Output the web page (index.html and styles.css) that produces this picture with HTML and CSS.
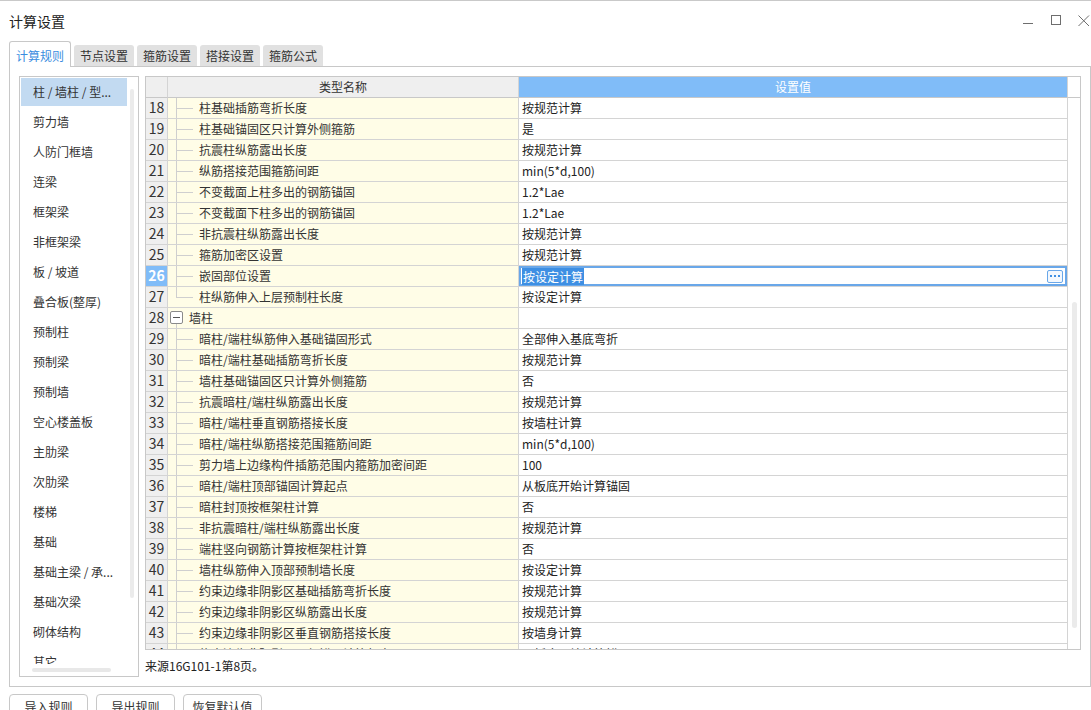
FILE: index.html
```html
<!DOCTYPE html>
<html lang="zh-CN">
<head>
<meta charset="utf-8">
<title>计算设置</title>
<link rel="stylesheet" href="styles.css">
</head>
<body>
<div class="window">
  <header class="titlebar">
    <span class="title">计算设置</span>
    <div class="controls">
      <svg class="ctl" width="12" height="12" viewBox="0 0 12 12"><line x1="1" y1="8.5" x2="11" y2="8.5" stroke="#6e6e6e" stroke-width="1"/></svg>
      <svg class="ctl" width="12" height="12" viewBox="0 0 12 12"><rect x="1.5" y="0.5" width="9" height="9" fill="none" stroke="#6e6e6e" stroke-width="1"/></svg>
      <svg class="ctl" width="12" height="12" viewBox="0 0 12 12"><path d="M0.5 0.5 L11 11 M11 0.5 L0.5 11" stroke="#6e6e6e" stroke-width="1" fill="none"/></svg>
    </div>
  </header>

  <nav class="tabs">
    <div class="tab active">计算规则</div>
    <div class="tab">节点设置</div>
    <div class="tab">箍筋设置</div>
    <div class="tab">搭接设置</div>
    <div class="tab">箍筋公式</div>
  </nav>

  <section class="panel">
    <aside class="sidebar">
      <ul class="cat-list">
        <li class="cat selected">柱 / 墙柱 / 型...</li>
        <li class="cat">剪力墙</li>
        <li class="cat">人防门框墙</li>
        <li class="cat">连梁</li>
        <li class="cat">框架梁</li>
        <li class="cat">非框架梁</li>
        <li class="cat">板 / 坡道</li>
        <li class="cat">叠合板(整厚)</li>
        <li class="cat">预制柱</li>
        <li class="cat">预制梁</li>
        <li class="cat">预制墙</li>
        <li class="cat">空心楼盖板</li>
        <li class="cat">主肋梁</li>
        <li class="cat">次肋梁</li>
        <li class="cat">楼梯</li>
        <li class="cat">基础</li>
        <li class="cat">基础主梁 / 承...</li>
        <li class="cat">基础次梁</li>
        <li class="cat">砌体结构</li>
        <li class="cat">其它</li>
      </ul>
      <div class="vscroll"></div>
      <div class="hscroll"></div>
    </aside>

    <div class="main">
      <div class="grid">
        <div class="grid-head">
          <div class="h-num"></div>
          <div class="h-name">类型名称</div>
          <div class="h-val">设置值</div>
          <div class="h-sb"></div>
        </div>
        <div class="grid-body">
          <div class="rows">
            <div class="row"><div class="num">18</div><div class="name"><span class="tree"></span>柱基础插筋弯折长度</div><div class="val">按规范计算</div></div>
            <div class="row"><div class="num">19</div><div class="name"><span class="tree"></span>柱基础锚固区只计算外侧箍筋</div><div class="val">是</div></div>
            <div class="row"><div class="num">20</div><div class="name"><span class="tree"></span>抗震柱纵筋露出长度</div><div class="val">按规范计算</div></div>
            <div class="row"><div class="num">21</div><div class="name"><span class="tree"></span>纵筋搭接范围箍筋间距</div><div class="val">min(5*d,100)</div></div>
            <div class="row"><div class="num">22</div><div class="name"><span class="tree"></span>不变截面上柱多出的钢筋锚固</div><div class="val">1.2*Lae</div></div>
            <div class="row"><div class="num">23</div><div class="name"><span class="tree"></span>不变截面下柱多出的钢筋锚固</div><div class="val">1.2*Lae</div></div>
            <div class="row"><div class="num">24</div><div class="name"><span class="tree"></span>非抗震柱纵筋露出长度</div><div class="val">按规范计算</div></div>
            <div class="row"><div class="num">25</div><div class="name"><span class="tree"></span>箍筋加密区设置</div><div class="val">按规范计算</div></div>
            <div class="row current"><div class="num">26</div><div class="name"><span class="tree"></span>嵌固部位设置</div><div class="val editing"><span class="sel">按设定计算</span><span class="more"><svg width="12" height="4" viewBox="0 0 12 4"><rect x="1" y="1" width="2" height="2" fill="#3e8fe3"/><rect x="5" y="1" width="2" height="2" fill="#3e8fe3"/><rect x="9" y="1" width="2" height="2" fill="#3e8fe3"/></svg></span></div></div>
            <div class="row"><div class="num">27</div><div class="name"><span class="tree last"></span>柱纵筋伸入上层预制柱长度</div><div class="val">按设定计算</div></div>
            <div class="row"><div class="num">28</div><div class="name group"><span class="toggle"></span>墙柱</div><div class="val"></div></div>
            <div class="row"><div class="num">29</div><div class="name"><span class="tree"></span>暗柱/端柱纵筋伸入基础锚固形式</div><div class="val">全部伸入基底弯折</div></div>
            <div class="row"><div class="num">30</div><div class="name"><span class="tree"></span>暗柱/端柱基础插筋弯折长度</div><div class="val">按规范计算</div></div>
            <div class="row"><div class="num">31</div><div class="name"><span class="tree"></span>墙柱基础锚固区只计算外侧箍筋</div><div class="val">否</div></div>
            <div class="row"><div class="num">32</div><div class="name"><span class="tree"></span>抗震暗柱/端柱纵筋露出长度</div><div class="val">按规范计算</div></div>
            <div class="row"><div class="num">33</div><div class="name"><span class="tree"></span>暗柱/端柱垂直钢筋搭接长度</div><div class="val">按墙柱计算</div></div>
            <div class="row"><div class="num">34</div><div class="name"><span class="tree"></span>暗柱/端柱纵筋搭接范围箍筋间距</div><div class="val">min(5*d,100)</div></div>
            <div class="row"><div class="num">35</div><div class="name"><span class="tree"></span>剪力墙上边缘构件插筋范围内箍筋加密间距</div><div class="val">100</div></div>
            <div class="row"><div class="num">36</div><div class="name"><span class="tree"></span>暗柱/端柱顶部锚固计算起点</div><div class="val">从板底开始计算锚固</div></div>
            <div class="row"><div class="num">37</div><div class="name"><span class="tree"></span>暗柱封顶按框架柱计算</div><div class="val">否</div></div>
            <div class="row"><div class="num">38</div><div class="name"><span class="tree"></span>非抗震暗柱/端柱纵筋露出长度</div><div class="val">按规范计算</div></div>
            <div class="row"><div class="num">39</div><div class="name"><span class="tree"></span>端柱竖向钢筋计算按框架柱计算</div><div class="val">否</div></div>
            <div class="row"><div class="num">40</div><div class="name"><span class="tree"></span>墙柱纵筋伸入顶部预制墙长度</div><div class="val">按设定计算</div></div>
            <div class="row"><div class="num">41</div><div class="name"><span class="tree"></span>约束边缘非阴影区基础插筋弯折长度</div><div class="val">按规范计算</div></div>
            <div class="row"><div class="num">42</div><div class="name"><span class="tree"></span>约束边缘非阴影区纵筋露出长度</div><div class="val">按规范计算</div></div>
            <div class="row"><div class="num">43</div><div class="name"><span class="tree"></span>约束边缘非阴影区垂直钢筋搭接长度</div><div class="val">按墙身计算</div></div>
            <div class="row"><div class="num">44</div><div class="name"><span class="tree"></span>约束边缘非阴影区顶部锚固计算起点</div><div class="val">从板底开始计算锚固</div></div>
          </div>
          <div class="scrolltrack"><div class="thumb"></div></div>
        </div>
      </div>
      <p class="note">来源16G101-1第8页。</p>
    </div>
  </section>

  <footer class="buttons">
    <button class="btn">导入规则</button>
    <button class="btn">导出规则</button>
    <button class="btn">恢复默认值</button>
  </footer>
</div>
</body>
</html>
```

FILE: styles.css
```css
* { box-sizing: border-box; }

html, body {
  margin: 0;
  padding: 0;
}

body {
  width: 1091px;
  height: 710px;
  overflow: hidden;
  background: #fff;
  font-family: "Noto Sans CJK SC", "Microsoft YaHei", "Noto Sans", sans-serif;
  font-size: 12px;
  color: #333;
}

.titlebar {
  height: 41px;
  border-top: 1px solid #c9c9c9;
  display: flex;
  align-items: center;
  justify-content: space-between;
  padding: 0 1px 0 9px;
}

.title {
  font-size: 14px;
  color: #222;
}

.controls {
  display: flex;
  gap: 16px;
  align-items: center;
}

.ctl { display: block; }

.tabs {
  display: flex;
  align-items: flex-end;
  gap: 3px;
  height: 25px;
  margin-left: 9px;
  position: relative;
  z-index: 1;
}

.tab {
  width: 60px;
  height: 21px;
  line-height: 21px;
  text-align: center;
  background: #e1e1e1;
  color: #333;
  border-radius: 3px 3px 0 0;
}

.tab.active {
  width: 62px;
  height: 26px;
  margin-bottom: -1px;
  padding-top: 3px;
  line-height: 21px;
  background: #fff;
  color: #3a8de0;
  border: 1px solid #c8c8c8;
  border-bottom: none;
}

.panel {
  margin-left: 9px;
  width: 1082px;
  height: 621px;
  border: 1px solid #c8c8c8;
  padding: 9px;
  display: flex;
  gap: 6px;
}

.sidebar {
  width: 120px;
  height: 601px;
  border: 1px solid #c8c8c8;
  position: relative;
  flex-shrink: 0;
}

.cat-list {
  list-style: none;
  margin: 0;
  padding: 0;
  height: 587px;
  overflow: hidden;
  display: flex;
  flex-direction: column;
}

.cat {
  flex-shrink: 0;
  width: 106px;
  height: 28px;
  margin: 1px 0 1px 1px;
  line-height: 27px;
  padding-left: 12px;
  white-space: nowrap;
  color: #333;
}

.cat.selected {
  background: #c2daf1;
}

.vscroll {
  position: absolute;
  left: 110px;
  top: 12px;
  width: 4px;
  height: 509px;
  background: #ebebeb;
  border-radius: 2px;
}

.hscroll {
  position: absolute;
  left: 12px;
  top: 591px;
  width: 79px;
  height: 4px;
  background: #e8e8e8;
  border-radius: 2px;
}

.main {
  width: 936px;
  display: flex;
  flex-direction: column;
}

.grid {
  height: 578px;
  border: 1px solid #c8c8c8;
  display: flex;
  flex-direction: column;
  overflow: hidden;
}

.grid-head {
  display: grid;
  grid-template-columns: 22px 351px 549px 12px;
  height: 21px;
  flex-shrink: 0;
}

.grid-head > div {
  border-bottom: 1px solid #c8c8c8;
  line-height: 19px;
  text-align: center;
}

.h-num, .h-name {
  background: #efefef;
  border-right: 1px solid #d4d4d4;
}

.h-val {
  background: #80bcf8;
  color: #fff;
  border-right: 1px solid #d4d4d4;
}

.h-sb { background: #fff; }

.grid-body {
  flex: 1;
  display: flex;
  overflow: hidden;
}

.rows {
  width: 922px;
  display: flex;
  flex-direction: column;
  overflow: hidden;
}

.row {
  display: grid;
  grid-template-columns: 22px 351px 549px;
  height: 21px;
  flex-shrink: 0;
}

.row > div {
  border-right: 1px solid #d4d4d4;
  border-bottom: 1px solid #d4d4d4;
}

.num {
  background: #efefef;
  text-align: center;
  font-size: 14px;
  line-height: 19px;
  color: #333;
}

.row.current .num {
  background: #80bcf8;
  color: #fff;
  font-weight: bold;
}

.name {
  background: #fffde7;
  display: flex;
  align-items: center;
  white-space: nowrap;
  position: relative;
  padding-bottom: 1px;
}

.tree {
  width: 31px;
  align-self: stretch;
  flex-shrink: 0;
  margin-bottom: -1px;
  background:
    linear-gradient(#cfcfcf, #cfcfcf) 8px 0 / 1px 100% no-repeat,
    linear-gradient(#cfcfcf, #cfcfcf) 8px 50% / 17px 1px no-repeat;
}

.tree.last {
  background:
    linear-gradient(#cfcfcf, #cfcfcf) 8px 0 / 1px 50% no-repeat,
    linear-gradient(#cfcfcf, #cfcfcf) 8px 50% / 17px 1px no-repeat;
}

.toggle {
  width: 13px;
  height: 13px;
  margin: 0 6px 0 2px;
  border: 1px solid #8a8a8a;
  border-radius: 2px;
  background: #fff;
  position: relative;
  flex-shrink: 0;
}

.toggle::before {
  content: "";
  position: absolute;
  left: 2px;
  top: 5px;
  width: 7px;
  height: 1px;
  background: #555;
}

.name.group::after {
  content: "";
  position: absolute;
  left: 8px;
  top: 16px;
  bottom: 0;
  width: 1px;
  background: #cfcfcf;
}

.val {
  background: #fff;
  padding-left: 3px;
  padding-bottom: 1px;
  display: flex;
  align-items: center;
  white-space: nowrap;
  color: #222;
}

.val.editing {
  justify-content: space-between;
  padding: 0 4px 0 3px;
  box-shadow: inset 0 0 0 2px #69a7e9;
}

.sel {
  background: #3e8fe3;
  color: #fff;
  line-height: 17px;
  padding: 0 1px;
}

.more {
  width: 16px;
  height: 13px;
  border: 1px solid #69a7e9;
  border-radius: 2px;
  background: #f3f8fe;
  display: flex;
  align-items: center;
  justify-content: center;
}

.more svg { display: block; }

.scrolltrack {
  width: 12px;
  position: relative;
  background: #fff;
}

.thumb {
  position: absolute;
  left: 4px;
  top: 204px;
  width: 5px;
  height: 326px;
  background: #ebebeb;
  border-radius: 3px;
}

.note {
  margin: 0;
  padding-top: 4px;
  line-height: 23px;
  color: #222;
}

.buttons {
  display: flex;
  gap: 8px;
  margin: 7px 0 0 9px;
}

.btn {
  width: 79px;
  height: 26px;
  border: 1px solid #c8c8c8;
  border-radius: 4px;
  background: #fff;
  font-family: inherit;
  font-size: 12px;
  color: #333;
  padding: 0;
  line-height: 24px;
}
```
